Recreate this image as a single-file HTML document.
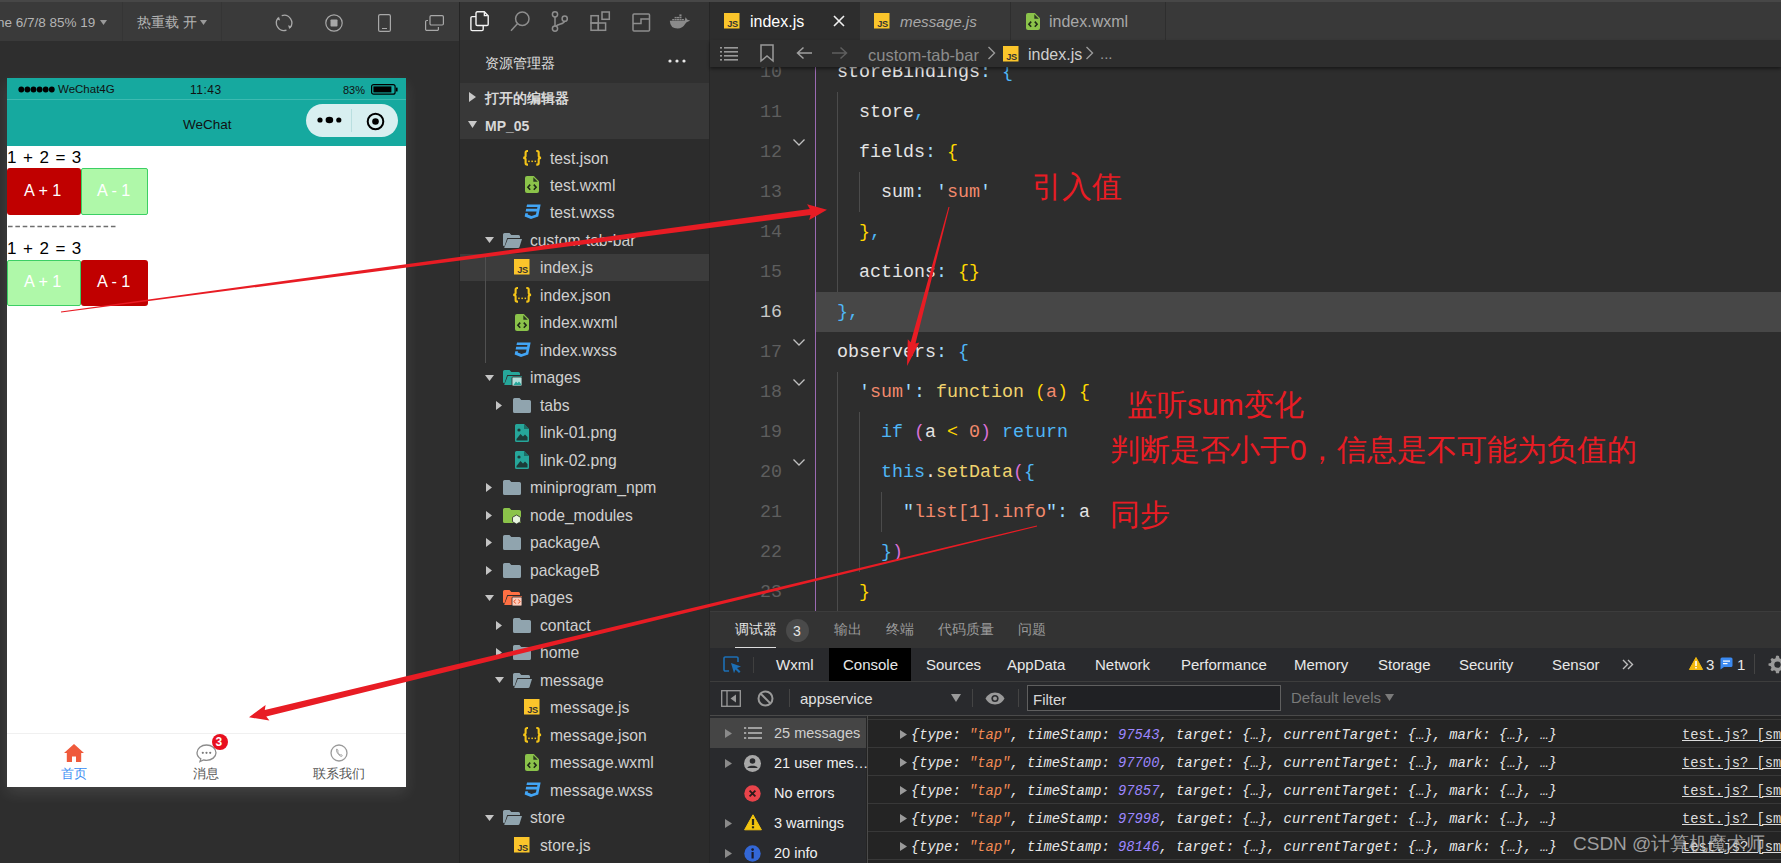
<!DOCTYPE html><html><head><meta charset="utf-8"><style>
*{margin:0;padding:0;box-sizing:border-box}
html,body{width:1781px;height:863px;overflow:hidden;background:#2e2e2e;font-family:"Liberation Sans",sans-serif;}
.a{position:absolute}
.t{position:absolute;white-space:nowrap;line-height:1}
svg{position:absolute;overflow:visible}
.mono{font-family:"Liberation Mono",monospace}
</style></head><body><div class="a" style="left:0px;top:0px;width:1781px;height:2px;background:#474747;"></div>
<div class="a" style="left:0px;top:2px;width:459px;height:38.5px;background:#3a3a3a;"></div>
<div class="a" style="left:122px;top:2px;width:1px;height:38.5px;background:#353535;"></div>
<div class="a" style="left:221px;top:2px;width:1px;height:38.5px;background:#353535;"></div>
<div class="t" style="left:-30px;top:15.5px;font-size:13.5px;color:#b4b4b4;">iPhone 6/7/8 85% 19</div>
<svg style="left:100px;top:20px" width="7" height="5"><path d="M0 0H7L3.5 5Z" fill="#9a9a9a"/></svg>
<div class="t" style="left:137px;top:15.5px;font-size:13.5px;color:#b4b4b4;">热重载 开</div>
<svg style="left:200px;top:20px" width="7" height="5"><path d="M0 0H7L3.5 5Z" fill="#9a9a9a"/></svg>
<svg style="left:275px;top:14px" width="18" height="18" viewBox="0 0 18 18"><path d="M6.72 1.58A7.7 7.7 0 0 1 15.00 13.85 M11.48 16.22A7.7 7.7 0 0 1 3.20 3.95" fill="none" stroke="#a8a8a8" stroke-width="1.3"/><path d="M14.24 15.03L16.65 12.58L13.08 11.20Z M3.96 2.77L1.55 5.22L5.12 6.60Z" fill="#a8a8a8"/></svg>
<svg style="left:325px;top:14px" width="18" height="18" viewBox="0 0 18 18"><circle cx="9" cy="9" r="8.2" fill="none" stroke="#a8a8a8" stroke-width="1.2"/><rect x="5.5" y="5.5" width="7" height="7" rx="0.8" fill="#a8a8a8"/></svg>
<svg style="left:378px;top:14px" width="13" height="18" viewBox="0 0 13 18"><rect x="0.6" y="0.6" width="11.8" height="16.8" rx="1.5" fill="none" stroke="#a8a8a8" stroke-width="1.2"/><rect x="4" y="14" width="5" height="1" fill="#a8a8a8"/></svg>
<svg style="left:425px;top:15px" width="19" height="16" viewBox="0 0 19 16" fill="none" stroke="#a8a8a8" stroke-width="1.2"><rect x="5" y="0.6" width="13.4" height="9.4" rx="1.2"/><path d="M3 5.5H1.8A1.2 1.2 0 0 0 0.6 6.7V14.2A1.2 1.2 0 0 0 1.8 15.4H12.2A1.2 1.2 0 0 0 13.4 14.2V12"/></svg>
<div class="a" style="left:7px;top:78px;width:399px;height:709px;background:#ffffff;box-shadow:0 6px 14px rgba(255,255,255,0.1);"></div>
<div class="a" style="left:7px;top:78px;width:399px;height:68px;background:#16a99f;"></div>
<div class="a" style="left:7px;top:99px;width:399px;height:1px;background:#3dbab1;"></div>
<svg style="left:17px;top:85px" width="38" height="9" viewBox="0 0 38 9"><circle cx="4.3" cy="4.5" r="2.9" fill="#000"/><circle cx="10.399999999999999" cy="4.5" r="2.9" fill="#000"/><circle cx="16.5" cy="4.5" r="2.9" fill="#000"/><circle cx="22.599999999999998" cy="4.5" r="2.9" fill="#000"/><circle cx="28.7" cy="4.5" r="2.9" fill="#000"/><circle cx="34.8" cy="4.5" r="2.9" fill="#000"/></svg>
<div class="t" style="left:58px;top:84px;font-size:11.5px;color:#111;">WeChat4G</div>
<div class="t" style="left:190px;top:84px;font-size:12px;color:#111;letter-spacing:0.5px">11:43</div>
<div class="t" style="left:343px;top:85px;font-size:11px;color:#111;">83%</div>
<svg style="left:371px;top:84px" width="28" height="11" viewBox="0 0 28 11"><rect x="0.6" y="0.6" width="23.5" height="9.6" rx="2" fill="none" stroke="#000" stroke-width="1.2"/><rect x="2.4" y="2.4" width="18" height="6" fill="#000"/><rect x="25" y="3.5" width="1.6" height="4" rx="0.5" fill="#000"/></svg>
<div class="t" style="left:183px;top:118px;font-size:13.5px;color:#111;">WeChat</div>
<div class="a" style="left:306px;top:104px;width:92px;height:33px;background:#d8eff0;border-radius:17px;"></div>
<div class="a" style="left:351px;top:109px;width:1px;height:23px;background:#b9dfe0;"></div>
<svg style="left:317px;top:115px" width="25" height="10" viewBox="0 0 25 10"><circle cx="3" cy="5" r="2.6" fill="#000"/><ellipse cx="12.4" cy="5" rx="3.8" ry="3.2" fill="#000"/><circle cx="21.8" cy="5" r="2.6" fill="#000"/></svg>
<svg style="left:366px;top:112px" width="19" height="19" viewBox="0 0 19 19"><circle cx="9.5" cy="9.5" r="7.8" fill="none" stroke="#000" stroke-width="2"/><circle cx="9.5" cy="9.5" r="3.3" fill="#000"/></svg>
<div class="t" style="left:7px;top:149px;font-size:17px;color:#000;letter-spacing:0.9px">1 + 2 = 3</div>
<div class="a" style="left:7px;top:168px;width:73.5px;height:46.5px;background:#c00000;border-radius:3px;"></div>
<div class="a" style="left:80.5px;top:168px;width:67.5px;height:46.5px;background:#aff8a9;border:1px solid #3ccf64;border-radius:2px;"></div>
<div class="t" style="left:24px;top:182px;font-size:16.2px;color:#fff;">A + 1</div>
<div class="t" style="left:97px;top:182px;font-size:16.2px;color:#fff;">A - 1</div>
<svg style="left:8px;top:225px" width="112" height="3" viewBox="0 0 112 3"><path d="M0 1.5H110" stroke="#6e6e6e" stroke-width="1.3" stroke-dasharray="4.6 2.75"/></svg>
<div class="t" style="left:7px;top:240px;font-size:17px;color:#000;letter-spacing:0.9px">1 + 2 = 3</div>
<div class="a" style="left:7px;top:259.5px;width:73.5px;height:46px;background:#aff8a9;border:1px solid #3ccf64;border-radius:2px;"></div>
<div class="a" style="left:80.5px;top:259.5px;width:67.5px;height:46px;background:#c00000;border-radius:3px;"></div>
<div class="t" style="left:24px;top:273px;font-size:16.2px;color:#fff;">A + 1</div>
<div class="t" style="left:97px;top:273px;font-size:16.2px;color:#fff;">A - 1</div>
<div class="a" style="left:7px;top:733px;width:399px;height:1px;background:#f0f0f0;"></div>
<svg style="left:64px;top:744px" width="20" height="18" viewBox="0 0 20 18"><path d="M10 0L0 9H2.8V18H8V12.5H12V18H17.2V9H20Z" fill="#ef5a3c"/></svg>
<div class="t" style="left:61px;top:768px;font-size:12.5px;color:#3c8ef3;">首页</div>
<svg style="left:196px;top:744px" width="21" height="18" viewBox="0 0 21 18"><path d="M10.5 1C5.3 1 1 4.6 1 8.8C1 11.3 2.5 13.5 4.8 14.9L4 17.5L7.6 15.9C8.5 16.2 9.5 16.4 10.5 16.4C15.7 16.4 20 12.9 20 8.7C20 4.5 15.7 1 10.5 1Z" fill="none" stroke="#8c8c8c" stroke-width="1.3"/><circle cx="6.8" cy="8.8" r="1.1" fill="#7a7a7a"/><circle cx="10.5" cy="8.8" r="1.1" fill="#7a7a7a"/><circle cx="14.2" cy="8.8" r="1.1" fill="#7a7a7a"/></svg>
<div class="a" style="left:211.5px;top:734px;width:16px;height:16px;border-radius:8px;background:#e8101f;"></div>
<div class="t" style="left:215.5px;top:736px;font-size:12px;color:#fff;font-weight:bold">3</div>
<div class="t" style="left:193px;top:768px;font-size:12.5px;color:#555;">消息</div>
<svg style="left:330px;top:744px" width="18" height="18" viewBox="0 0 18 18"><circle cx="9" cy="9" r="8" fill="none" stroke="#9a9a9a" stroke-width="1.3"/><path d="M6.5 5.2C6 6.8 7.6 10.6 10.6 12.2C11.3 12.6 12.2 12.3 12.3 11.6L11 10.5L10.2 11C9 10.3 8 9 7.6 7.8L8.2 7.2L7.4 5.4Z" fill="none" stroke="#9a9a9a" stroke-width="0.9"/></svg>
<div class="t" style="left:313px;top:768px;font-size:12.5px;color:#555;">联系我们</div>
<div class="a" style="left:459px;top:2px;width:1px;height:861px;background:#252525;"></div>
<div class="a" style="left:460px;top:2px;width:250px;height:38px;background:#333333;"></div>
<div class="a" style="left:709px;top:2px;width:1px;height:861px;background:#262626;"></div>
<svg style="left:470px;top:11px" width="20" height="21" viewBox="0 0 20 21" fill="none" stroke="#f4f4f4" stroke-width="1.4"><path d="M6 5.6H2.2Q0.9 5.6 0.9 6.9V18.3Q0.9 19.6 2.2 19.6H11.9Q13.2 19.6 13.2 18.3V14.6"/><path d="M7.3 0.8H14.3L18.2 4.7V13.2Q18.2 14.5 16.9 14.5H7.3Q6 14.5 6 13.2V2.1Q6 0.8 7.3 0.8Z"/><path d="M14.4 1.3V4.6H17.7"/></svg>
<svg style="left:510px;top:11px" width="20" height="21" viewBox="0 0 20 21" fill="none" stroke="#8e8e8e" stroke-width="1.5"><circle cx="12.3" cy="7.7" r="6.7"/><path d="M7.6 12.6L1 19.8"/></svg>
<svg style="left:551px;top:11px" width="18" height="21" viewBox="0 0 18 21" fill="none" stroke="#8e8e8e" stroke-width="1.5"><circle cx="4" cy="3.3" r="2.6"/><circle cx="4" cy="17.6" r="2.6"/><circle cx="13.7" cy="7.7" r="2.6"/><path d="M4 6V15"/><path d="M13.5 10.3C13 13.2 8 12.5 5 15"/></svg>
<svg style="left:590px;top:11px" width="21" height="21" viewBox="0 0 21 21" fill="none" stroke="#8e8e8e" stroke-width="1.5"><rect x="1" y="4.7" width="7.3" height="7.3"/><rect x="1" y="12" width="7.3" height="7.3"/><rect x="8.3" y="12" width="7.3" height="7.3"/><rect x="12" y="1" width="7.3" height="7.3"/></svg>
<svg style="left:632px;top:13px" width="19" height="19" viewBox="0 0 19 19" fill="none" stroke="#8e8e8e" stroke-width="1.5"><rect x="1" y="1" width="16.5" height="17" rx="1"/><path d="M1 10.5H9V6H17.5"/></svg>
<svg style="left:669px;top:13px" width="22" height="16" viewBox="0 0 22 16" fill="#8a8a8a"><path d="M0.8 7.8H15.6L16.6 4.2L18.4 6.8L21.2 7.6L19.2 8.6Q17.4 9.2 16.3 10.8Q13.6 15.6 8.6 15.6Q1.2 15.6 0.8 7.8Z"/><rect x="3.2" y="6" width="2.1" height="1.4"/><rect x="5.6" y="6" width="2.1" height="1.4"/><rect x="8.0" y="6" width="2.1" height="1.4"/><rect x="10.4" y="6" width="2.1" height="1.4"/><rect x="12.8" y="6" width="2.1" height="1.4"/><rect x="5.6" y="3.9" width="2.1" height="1.4"/><rect x="8.0" y="3.9" width="2.1" height="1.4"/><rect x="10.4" y="3.9" width="2.1" height="1.4"/><rect x="10.4" y="1.4" width="2.1" height="2"/></svg>
<div class="a" style="left:460px;top:40px;width:249px;height:823px;background:#2c2c2c;"></div>
<div class="t" style="left:550px;top:122.52px;font-size:16px;color:#cfcfcf">test.js</div>
<svg style="left:521.8px;top:149.6px" width="20.3" height="15.7" viewBox="0 0 20.3 15.7" fill="none" stroke="#f5c518" stroke-width="2.1"><path d="M6 1.05H5.2Q3.6 1.05 3.6 2.6V6.1Q3.6 7.6 1.3 7.85Q3.6 8.1 3.6 9.6V13.1Q3.6 14.65 5.2 14.65H6"/><path d="M14.3 1.05H15.1Q16.7 1.05 16.7 2.6V6.1Q16.7 7.6 19 7.85Q16.7 8.1 16.7 9.6V13.1Q16.7 14.65 15.1 14.65H14.3"/><rect x="6.2" y="10.6" width="1.5" height="1.5" fill="#f5c518" stroke="none"/><rect x="9.4" y="10.6" width="1.5" height="1.5" fill="#f5c518" stroke="none"/><rect x="12.6" y="10.6" width="1.5" height="1.5" fill="#f5c518" stroke="none"/></svg>
<div class="t" style="left:550px;top:150.5px;font-size:15.7px;color:#d0d0d0">test.json</div>
<svg style="left:525px;top:176.48px" width="14" height="17" viewBox="0 0 14 17"><path d="M2 0H8.8L14 5.2V15A2 2 0 0 1 12 17H2A2 2 0 0 1 0 15V2A2 2 0 0 1 2 0Z" fill="#8bc34a"/><path d="M8.3 1.2V5.7H12.8Z" fill="#2c3a22"/><path d="M5.2 8.6L2.9 11.2L5.2 13.8M8.8 8.6L11.1 11.2L8.8 13.8" fill="none" stroke="#1f2a18" stroke-width="1.6"/></svg>
<div class="t" style="left:550px;top:177.98px;font-size:15.7px;color:#d0d0d0">test.wxml</div>
<svg style="left:522.5px;top:202.46px" width="19.3" height="19.3" viewBox="0 0 24 24"><path d="M5 3l-.65 3.34h13.59L17.5 8.5H3.92l-.66 3.33h13.59l-.76 3.81-5.48 1.81-4.75-1.81.33-1.64H2.85l-.79 4 7.85 3 9.05-3 1.2-6.03.24-1.21L21.94 3H5z" fill="#42a5f5"/></svg>
<div class="t" style="left:550px;top:205.46px;font-size:15.7px;color:#d0d0d0">test.wxss</div>
<svg style="left:485px;top:237.44px" width="9" height="6" viewBox="0 0 9 6"><path d="M0 0H9L4.5 6Z" fill="#c4c4c4"/></svg>
<svg style="left:503px;top:232.94px" width="19" height="15" viewBox="0 0 19 15"><path d="M1.6 0H6.5L8.3 2H15.5A1.6 1.6 0 0 1 17 3.6V5H4.2L1.4 13.6L0 12.5V1.6A1.6 1.6 0 0 1 1.6 0Z" fill="#90a4ae"/><path d="M4.8 6H19L16.4 14.2A1.3 1.3 0 0 1 15.2 15H1.2Z" fill="#90a4ae"/></svg>
<div class="t" style="left:530px;top:232.94px;font-size:15.7px;color:#d0d0d0">custom-tab-bar</div>
<div class="a" style="left:460px;top:253.92000000000002px;width:249px;height:27px;background:#3c3c3c;"></div>
<svg style="left:514px;top:259.42px" width="15.5" height="15.5" viewBox="0 0 15.5 15.5"><rect width="15.5" height="15.5" fill="#fbc52b"/><text x="14" y="14" text-anchor="end" font-family="Liberation Sans" font-size="9.2" font-weight="bold" fill="#333" letter-spacing="-0.2">JS</text></svg>
<div class="t" style="left:540px;top:260.42px;font-size:15.7px;color:#d0d0d0">index.js</div>
<svg style="left:511.8px;top:287.0px" width="20.3" height="15.7" viewBox="0 0 20.3 15.7" fill="none" stroke="#f5c518" stroke-width="2.1"><path d="M6 1.05H5.2Q3.6 1.05 3.6 2.6V6.1Q3.6 7.6 1.3 7.85Q3.6 8.1 3.6 9.6V13.1Q3.6 14.65 5.2 14.65H6"/><path d="M14.3 1.05H15.1Q16.7 1.05 16.7 2.6V6.1Q16.7 7.6 19 7.85Q16.7 8.1 16.7 9.6V13.1Q16.7 14.65 15.1 14.65H14.3"/><rect x="6.2" y="10.6" width="1.5" height="1.5" fill="#f5c518" stroke="none"/><rect x="9.4" y="10.6" width="1.5" height="1.5" fill="#f5c518" stroke="none"/><rect x="12.6" y="10.6" width="1.5" height="1.5" fill="#f5c518" stroke="none"/></svg>
<div class="t" style="left:540px;top:287.9px;font-size:15.7px;color:#d0d0d0">index.json</div>
<svg style="left:515px;top:313.88px" width="14" height="17" viewBox="0 0 14 17"><path d="M2 0H8.8L14 5.2V15A2 2 0 0 1 12 17H2A2 2 0 0 1 0 15V2A2 2 0 0 1 2 0Z" fill="#8bc34a"/><path d="M8.3 1.2V5.7H12.8Z" fill="#2c3a22"/><path d="M5.2 8.6L2.9 11.2L5.2 13.8M8.8 8.6L11.1 11.2L8.8 13.8" fill="none" stroke="#1f2a18" stroke-width="1.6"/></svg>
<div class="t" style="left:540px;top:315.38px;font-size:15.7px;color:#d0d0d0">index.wxml</div>
<svg style="left:512.5px;top:339.86px" width="19.3" height="19.3" viewBox="0 0 24 24"><path d="M5 3l-.65 3.34h13.59L17.5 8.5H3.92l-.66 3.33h13.59l-.76 3.81-5.48 1.81-4.75-1.81.33-1.64H2.85l-.79 4 7.85 3 9.05-3 1.2-6.03.24-1.21L21.94 3H5z" fill="#42a5f5"/></svg>
<div class="t" style="left:540px;top:342.86px;font-size:15.7px;color:#d0d0d0">index.wxss</div>
<svg style="left:485px;top:374.84000000000003px" width="9" height="6" viewBox="0 0 9 6"><path d="M0 0H9L4.5 6Z" fill="#c4c4c4"/></svg>
<svg style="left:503px;top:370.34000000000003px" width="19" height="15" viewBox="0 0 19 15"><path d="M1.6 0H6.5L8.3 2H15.5A1.6 1.6 0 0 1 17 3.6V5H4.2L1.4 13.6L0 12.5V1.6A1.6 1.6 0 0 1 1.6 0Z" fill="#26a69a"/><path d="M4.8 6H19L16.4 14.2A1.3 1.3 0 0 1 15.2 15H1.2Z" fill="#26a69a"/><rect x="9" y="7" width="10" height="9" rx="1" fill="#b2dfdb" stroke="#2c2c2c" stroke-width="0.8"/><path d="M10.5 15L13 11.5L14.5 13L16 11.5L18 14V15Z" fill="#26a69a"/></svg>
<div class="t" style="left:530px;top:370.34000000000003px;font-size:15.7px;color:#d0d0d0">images</div>
<svg style="left:496px;top:400.82px" width="6" height="9" viewBox="0 0 6 9"><path d="M0 0V9L6 4.5Z" fill="#c4c4c4"/></svg>
<svg style="left:513px;top:397.82px" width="18" height="15" viewBox="0 0 18 15"><path d="M1.6 0H6.5L8.3 2H16.4A1.6 1.6 0 0 1 18 3.6V13.4A1.6 1.6 0 0 1 16.4 15H1.6A1.6 1.6 0 0 1 0 13.4V1.6A1.6 1.6 0 0 1 1.6 0Z" fill="#90a4ae"/></svg>
<div class="t" style="left:540px;top:397.82px;font-size:15.7px;color:#d0d0d0">tabs</div>
<svg style="left:515px;top:423.8px" width="14" height="18" viewBox="0 0 14 18"><path d="M1.5 0H9L14 5V16.5A1.5 1.5 0 0 1 12.5 18H1.5A1.5 1.5 0 0 1 0 16.5V1.5A1.5 1.5 0 0 1 1.5 0Z" fill="#26a69a"/><path d="M9 0V5H14Z" fill="#1c6e66"/><circle cx="4" cy="6" r="1.6" fill="#1d3b38"/><path d="M1.5 15L5.5 10L8 12.5L10 10.5L12.5 13V16.5H1.5Z" fill="#1d3b38"/></svg>
<div class="t" style="left:540px;top:425.3px;font-size:15.7px;color:#d0d0d0">link-01.png</div>
<svg style="left:515px;top:451.28000000000003px" width="14" height="18" viewBox="0 0 14 18"><path d="M1.5 0H9L14 5V16.5A1.5 1.5 0 0 1 12.5 18H1.5A1.5 1.5 0 0 1 0 16.5V1.5A1.5 1.5 0 0 1 1.5 0Z" fill="#26a69a"/><path d="M9 0V5H14Z" fill="#1c6e66"/><circle cx="4" cy="6" r="1.6" fill="#1d3b38"/><path d="M1.5 15L5.5 10L8 12.5L10 10.5L12.5 13V16.5H1.5Z" fill="#1d3b38"/></svg>
<div class="t" style="left:540px;top:452.78000000000003px;font-size:15.7px;color:#d0d0d0">link-02.png</div>
<svg style="left:486px;top:483.26px" width="6" height="9" viewBox="0 0 6 9"><path d="M0 0V9L6 4.5Z" fill="#c4c4c4"/></svg>
<svg style="left:503px;top:480.26px" width="18" height="15" viewBox="0 0 18 15"><path d="M1.6 0H6.5L8.3 2H16.4A1.6 1.6 0 0 1 18 3.6V13.4A1.6 1.6 0 0 1 16.4 15H1.6A1.6 1.6 0 0 1 0 13.4V1.6A1.6 1.6 0 0 1 1.6 0Z" fill="#90a4ae"/></svg>
<div class="t" style="left:530px;top:480.26px;font-size:15.7px;color:#d0d0d0">miniprogram_npm</div>
<svg style="left:486px;top:510.74px" width="6" height="9" viewBox="0 0 6 9"><path d="M0 0V9L6 4.5Z" fill="#c4c4c4"/></svg>
<svg style="left:503px;top:507.74px" width="18" height="15" viewBox="0 0 18 15"><path d="M1.6 0H6.5L8.3 2H16.4A1.6 1.6 0 0 1 18 3.6V13.4A1.6 1.6 0 0 1 16.4 15H1.6A1.6 1.6 0 0 1 0 13.4V1.6A1.6 1.6 0 0 1 1.6 0Z" fill="#8bc34a"/><path d="M13.5 7L17.5 9.3V13.7L13.5 16L9.5 13.7V9.3Z" fill="#e8f5e0" stroke="#2c2c2c" stroke-width="0.8"/></svg>
<div class="t" style="left:530px;top:507.74px;font-size:15.7px;color:#d0d0d0">node_modules</div>
<svg style="left:486px;top:538.22px" width="6" height="9" viewBox="0 0 6 9"><path d="M0 0V9L6 4.5Z" fill="#c4c4c4"/></svg>
<svg style="left:503px;top:535.22px" width="18" height="15" viewBox="0 0 18 15"><path d="M1.6 0H6.5L8.3 2H16.4A1.6 1.6 0 0 1 18 3.6V13.4A1.6 1.6 0 0 1 16.4 15H1.6A1.6 1.6 0 0 1 0 13.4V1.6A1.6 1.6 0 0 1 1.6 0Z" fill="#90a4ae"/></svg>
<div class="t" style="left:530px;top:535.22px;font-size:15.7px;color:#d0d0d0">packageA</div>
<svg style="left:486px;top:565.7px" width="6" height="9" viewBox="0 0 6 9"><path d="M0 0V9L6 4.5Z" fill="#c4c4c4"/></svg>
<svg style="left:503px;top:562.7px" width="18" height="15" viewBox="0 0 18 15"><path d="M1.6 0H6.5L8.3 2H16.4A1.6 1.6 0 0 1 18 3.6V13.4A1.6 1.6 0 0 1 16.4 15H1.6A1.6 1.6 0 0 1 0 13.4V1.6A1.6 1.6 0 0 1 1.6 0Z" fill="#90a4ae"/></svg>
<div class="t" style="left:530px;top:562.7px;font-size:15.7px;color:#d0d0d0">packageB</div>
<svg style="left:485px;top:594.6800000000001px" width="9" height="6" viewBox="0 0 9 6"><path d="M0 0H9L4.5 6Z" fill="#c4c4c4"/></svg>
<svg style="left:503px;top:590.1800000000001px" width="19" height="15" viewBox="0 0 19 15"><path d="M1.6 0H6.5L8.3 2H15.5A1.6 1.6 0 0 1 17 3.6V5H4.2L1.4 13.6L0 12.5V1.6A1.6 1.6 0 0 1 1.6 0Z" fill="#ff7043"/><path d="M4.8 6H19L16.4 14.2A1.3 1.3 0 0 1 15.2 15H1.2Z" fill="#ff7043"/><rect x="9" y="7" width="10" height="9" rx="1" fill="#ffccbc" stroke="#2c2c2c" stroke-width="0.8"/><path d="M12.6 9.5L11 11.5L12.6 13.5M15.4 9.5L17 11.5L15.4 13.5" fill="none" stroke="#e64a19" stroke-width="1"/></svg>
<div class="t" style="left:530px;top:590.1800000000001px;font-size:15.7px;color:#d0d0d0">pages</div>
<svg style="left:496px;top:620.6600000000001px" width="6" height="9" viewBox="0 0 6 9"><path d="M0 0V9L6 4.5Z" fill="#c4c4c4"/></svg>
<svg style="left:513px;top:617.6600000000001px" width="18" height="15" viewBox="0 0 18 15"><path d="M1.6 0H6.5L8.3 2H16.4A1.6 1.6 0 0 1 18 3.6V13.4A1.6 1.6 0 0 1 16.4 15H1.6A1.6 1.6 0 0 1 0 13.4V1.6A1.6 1.6 0 0 1 1.6 0Z" fill="#90a4ae"/></svg>
<div class="t" style="left:540px;top:617.6600000000001px;font-size:15.7px;color:#d0d0d0">contact</div>
<svg style="left:496px;top:648.14px" width="6" height="9" viewBox="0 0 6 9"><path d="M0 0V9L6 4.5Z" fill="#c4c4c4"/></svg>
<svg style="left:513px;top:645.14px" width="18" height="15" viewBox="0 0 18 15"><path d="M1.6 0H6.5L8.3 2H16.4A1.6 1.6 0 0 1 18 3.6V13.4A1.6 1.6 0 0 1 16.4 15H1.6A1.6 1.6 0 0 1 0 13.4V1.6A1.6 1.6 0 0 1 1.6 0Z" fill="#90a4ae"/></svg>
<div class="t" style="left:540px;top:645.14px;font-size:15.7px;color:#d0d0d0">home</div>
<svg style="left:495px;top:677.12px" width="9" height="6" viewBox="0 0 9 6"><path d="M0 0H9L4.5 6Z" fill="#c4c4c4"/></svg>
<svg style="left:513px;top:672.62px" width="19" height="15" viewBox="0 0 19 15"><path d="M1.6 0H6.5L8.3 2H15.5A1.6 1.6 0 0 1 17 3.6V5H4.2L1.4 13.6L0 12.5V1.6A1.6 1.6 0 0 1 1.6 0Z" fill="#90a4ae"/><path d="M4.8 6H19L16.4 14.2A1.3 1.3 0 0 1 15.2 15H1.2Z" fill="#90a4ae"/></svg>
<div class="t" style="left:540px;top:672.62px;font-size:15.7px;color:#d0d0d0">message</div>
<svg style="left:524px;top:699.1px" width="15.5" height="15.5" viewBox="0 0 15.5 15.5"><rect width="15.5" height="15.5" fill="#fbc52b"/><text x="14" y="14" text-anchor="end" font-family="Liberation Sans" font-size="9.2" font-weight="bold" fill="#333" letter-spacing="-0.2">JS</text></svg>
<div class="t" style="left:550px;top:700.1px;font-size:15.7px;color:#d0d0d0">message.js</div>
<svg style="left:521.8px;top:726.6800000000001px" width="20.3" height="15.7" viewBox="0 0 20.3 15.7" fill="none" stroke="#f5c518" stroke-width="2.1"><path d="M6 1.05H5.2Q3.6 1.05 3.6 2.6V6.1Q3.6 7.6 1.3 7.85Q3.6 8.1 3.6 9.6V13.1Q3.6 14.65 5.2 14.65H6"/><path d="M14.3 1.05H15.1Q16.7 1.05 16.7 2.6V6.1Q16.7 7.6 19 7.85Q16.7 8.1 16.7 9.6V13.1Q16.7 14.65 15.1 14.65H14.3"/><rect x="6.2" y="10.6" width="1.5" height="1.5" fill="#f5c518" stroke="none"/><rect x="9.4" y="10.6" width="1.5" height="1.5" fill="#f5c518" stroke="none"/><rect x="12.6" y="10.6" width="1.5" height="1.5" fill="#f5c518" stroke="none"/></svg>
<div class="t" style="left:550px;top:727.58px;font-size:15.7px;color:#d0d0d0">message.json</div>
<svg style="left:525px;top:753.5600000000001px" width="14" height="17" viewBox="0 0 14 17"><path d="M2 0H8.8L14 5.2V15A2 2 0 0 1 12 17H2A2 2 0 0 1 0 15V2A2 2 0 0 1 2 0Z" fill="#8bc34a"/><path d="M8.3 1.2V5.7H12.8Z" fill="#2c3a22"/><path d="M5.2 8.6L2.9 11.2L5.2 13.8M8.8 8.6L11.1 11.2L8.8 13.8" fill="none" stroke="#1f2a18" stroke-width="1.6"/></svg>
<div class="t" style="left:550px;top:755.0600000000001px;font-size:15.7px;color:#d0d0d0">message.wxml</div>
<svg style="left:522.5px;top:779.54px" width="19.3" height="19.3" viewBox="0 0 24 24"><path d="M5 3l-.65 3.34h13.59L17.5 8.5H3.92l-.66 3.33h13.59l-.76 3.81-5.48 1.81-4.75-1.81.33-1.64H2.85l-.79 4 7.85 3 9.05-3 1.2-6.03.24-1.21L21.94 3H5z" fill="#42a5f5"/></svg>
<div class="t" style="left:550px;top:782.54px;font-size:15.7px;color:#d0d0d0">message.wxss</div>
<svg style="left:485px;top:814.52px" width="9" height="6" viewBox="0 0 9 6"><path d="M0 0H9L4.5 6Z" fill="#c4c4c4"/></svg>
<svg style="left:503px;top:810.02px" width="19" height="15" viewBox="0 0 19 15"><path d="M1.6 0H6.5L8.3 2H15.5A1.6 1.6 0 0 1 17 3.6V5H4.2L1.4 13.6L0 12.5V1.6A1.6 1.6 0 0 1 1.6 0Z" fill="#90a4ae"/><path d="M4.8 6H19L16.4 14.2A1.3 1.3 0 0 1 15.2 15H1.2Z" fill="#90a4ae"/></svg>
<div class="t" style="left:530px;top:810.02px;font-size:15.7px;color:#d0d0d0">store</div>
<svg style="left:514px;top:836.5px" width="15.5" height="15.5" viewBox="0 0 15.5 15.5"><rect width="15.5" height="15.5" fill="#fbc52b"/><text x="14" y="14" text-anchor="end" font-family="Liberation Sans" font-size="9.2" font-weight="bold" fill="#333" letter-spacing="-0.2">JS</text></svg>
<div class="t" style="left:540px;top:837.5px;font-size:15.7px;color:#d0d0d0">store.js</div>
<div class="a" style="left:485px;top:254.92000000000002px;width:1px;height:107.92px;background:#505050;"></div>
<div class="a" style="left:460px;top:40px;width:249px;height:43px;background:#303030;"></div>
<div class="t" style="left:485px;top:56.5px;font-size:13.5px;color:#e0e0e0;">资源管理器</div>
<svg style="left:668px;top:59px" width="18" height="4" viewBox="0 0 18 4" fill="#e8e8e8"><circle cx="2" cy="2" r="1.6"/><circle cx="9" cy="2" r="1.6"/><circle cx="16" cy="2" r="1.6"/></svg>
<div class="a" style="left:460px;top:83px;width:249px;height:55.5px;background:#383838;"></div>
<svg style="left:469px;top:92px" width="7" height="10" viewBox="0 0 7 10"><path d="M0 0V10L7 5Z" fill="#c8c8c8"/></svg>
<div class="t" style="left:485px;top:92px;font-size:13.5px;color:#d8d8d8;font-weight:bold">打开的编辑器</div>
<svg style="left:468px;top:121px" width="9" height="7" viewBox="0 0 9 7"><path d="M0 0H9L4.5 7Z" fill="#c8c8c8"/></svg>
<div class="t" style="left:485px;top:118.5px;font-size:14px;color:#d8d8d8;font-weight:bold">MP_05</div>
<div class="a" style="left:710px;top:2px;width:1071px;height:38px;background:#393939;"></div>
<div class="a" style="left:710px;top:2px;width:150px;height:38px;background:#2d2d2d;"></div>
<div class="a" style="left:860px;top:2px;width:150px;height:38px;background:#383838;"></div>
<div class="a" style="left:1010px;top:2px;width:1px;height:38px;background:#2e2e2e;"></div>
<div class="a" style="left:1011px;top:2px;width:154px;height:38px;background:#383838;"></div>
<div class="a" style="left:1165px;top:2px;width:1px;height:38px;background:#2e2e2e;"></div>
<svg style="left:724px;top:12.5px" width="15.5" height="15.5" viewBox="0 0 15.5 15.5"><rect width="15.5" height="15.5" fill="#fbc52b"/><text x="14" y="14" text-anchor="end" font-family="Liberation Sans" font-size="9.2" font-weight="bold" fill="#333" letter-spacing="-0.2">JS</text></svg>
<div class="t" style="left:750px;top:13.5px;font-size:16px;color:#ffffff;">index.js</div>
<svg style="left:833px;top:15px" width="12" height="12" viewBox="0 0 12 12" stroke="#f0f0f0" stroke-width="1.6"><path d="M1 1L11 11M11 1L1 11"/></svg>
<svg style="left:874px;top:12.5px" width="15.5" height="15.5" viewBox="0 0 15.5 15.5"><rect width="15.5" height="15.5" fill="#fbc52b"/><text x="14" y="14" text-anchor="end" font-family="Liberation Sans" font-size="9.2" font-weight="bold" fill="#333" letter-spacing="-0.2">JS</text></svg>
<div class="t" style="left:900px;top:13.5px;font-size:15.2px;color:#a8a8a8;font-style:italic">message.js</div>
<svg style="left:1026px;top:13px" width="14" height="17" viewBox="0 0 14 17"><path d="M2 0H8.8L14 5.2V15A2 2 0 0 1 12 17H2A2 2 0 0 1 0 15V2A2 2 0 0 1 2 0Z" fill="#8bc34a"/><path d="M8.3 1.2V5.7H12.8Z" fill="#2c3a22"/><path d="M5.2 8.6L2.9 11.2L5.2 13.8M8.8 8.6L11.1 11.2L8.8 13.8" fill="none" stroke="#1f2a18" stroke-width="1.6"/></svg>
<div class="t" style="left:1049px;top:13.5px;font-size:16px;color:#a8a8a8;">index.wxml</div>
<div class="a" style="left:710px;top:67px;width:1071px;height:545px;background:#2d2d2d;"></div>
<div class="a" style="left:816px;top:292px;width:965px;height:40px;background:#474747;"></div>
<div class="a" style="left:815px;top:67px;width:1px;height:545px;background:#9b6ab3;"></div>
<div class="a" style="left:837px;top:92px;width:1px;height:200px;background:#4b4b4b;"></div>
<div class="a" style="left:859px;top:172px;width:1px;height:40px;background:#4b4b4b;"></div>
<div class="a" style="left:837px;top:372px;width:1px;height:240px;background:#4b4b4b;"></div>
<div class="a" style="left:859px;top:412px;width:1px;height:160px;background:#4b4b4b;"></div>
<div class="a" style="left:881px;top:492px;width:1px;height:40px;background:#4b4b4b;"></div>
<div class="t mono" style="left:700px;width:82px;text-align:right;top:64px;font-size:18.33px;color:#5e5e5e">10</div>
<div class="t mono" style="left:837px;top:64px;font-size:18.33px;color:#e4e4e4"><span style="color:#e4e4e4">storeBindings</span><span style="color:#9cdcfe">:</span> <span style="color:#4fb6f5">{</span></div>
<div class="t mono" style="left:700px;width:82px;text-align:right;top:104px;font-size:18.33px;color:#5e5e5e">11</div>
<div class="t mono" style="left:859px;top:104px;font-size:18.33px;color:#e4e4e4"><span style="color:#e4e4e4">store</span><span style="color:#4fb6f5">,</span></div>
<div class="t mono" style="left:700px;width:82px;text-align:right;top:144px;font-size:18.33px;color:#5e5e5e">12</div>
<div class="t mono" style="left:859px;top:144px;font-size:18.33px;color:#e4e4e4"><span style="color:#e4e4e4">fields</span><span style="color:#9cdcfe">:</span> <span style="color:#ffd700">{</span></div>
<div class="t mono" style="left:700px;width:82px;text-align:right;top:184px;font-size:18.33px;color:#5e5e5e">13</div>
<div class="t mono" style="left:881px;top:184px;font-size:18.33px;color:#e4e4e4"><span style="color:#e4e4e4">sum</span><span style="color:#9cdcfe">:</span> <span style="color:#9cdcfe">'</span><span style="color:#f28a6c">sum</span><span style="color:#9cdcfe">'</span></div>
<div class="t mono" style="left:700px;width:82px;text-align:right;top:224px;font-size:18.33px;color:#5e5e5e">14</div>
<div class="t mono" style="left:859px;top:224px;font-size:18.33px;color:#e4e4e4"><span style="color:#ffd700">}</span><span style="color:#4fb6f5">,</span></div>
<div class="t mono" style="left:700px;width:82px;text-align:right;top:264px;font-size:18.33px;color:#5e5e5e">15</div>
<div class="t mono" style="left:859px;top:264px;font-size:18.33px;color:#e4e4e4"><span style="color:#e4e4e4">actions</span><span style="color:#9cdcfe">:</span> <span style="color:#ffd700">{}</span></div>
<div class="t mono" style="left:700px;width:82px;text-align:right;top:304px;font-size:18.33px;color:#c8c8c8">16</div>
<div class="t mono" style="left:837px;top:304px;font-size:18.33px;color:#e4e4e4"><span style="color:#4fb6f5">}</span><span style="color:#4fb6f5">,</span></div>
<div class="t mono" style="left:700px;width:82px;text-align:right;top:344px;font-size:18.33px;color:#5e5e5e">17</div>
<div class="t mono" style="left:837px;top:344px;font-size:18.33px;color:#e4e4e4"><span style="color:#e4e4e4">observers</span><span style="color:#9cdcfe">:</span> <span style="color:#4fb6f5">{</span></div>
<div class="t mono" style="left:700px;width:82px;text-align:right;top:384px;font-size:18.33px;color:#5e5e5e">18</div>
<div class="t mono" style="left:859px;top:384px;font-size:18.33px;color:#e4e4e4"><span style="color:#9cdcfe">'</span><span style="color:#f28a6c">sum</span><span style="color:#9cdcfe">'</span><span style="color:#9cdcfe">:</span> <span style="color:#f0d36e">function</span> <span style="color:#ffd700">(</span><span style="color:#f28a6c">a</span><span style="color:#ffd700">)</span> <span style="color:#ffd700">{</span></div>
<div class="t mono" style="left:700px;width:82px;text-align:right;top:424px;font-size:18.33px;color:#5e5e5e">19</div>
<div class="t mono" style="left:881px;top:424px;font-size:18.33px;color:#e4e4e4"><span style="color:#4fb6f5">if</span> <span style="color:#da70d6">(</span><span style="color:#e4e4e4">a</span> <span style="color:#ffd700">&lt;</span> <span style="color:#f28a6c">0</span><span style="color:#da70d6">)</span> <span style="color:#4fb6f5">return</span></div>
<div class="t mono" style="left:700px;width:82px;text-align:right;top:464px;font-size:18.33px;color:#5e5e5e">20</div>
<div class="t mono" style="left:881px;top:464px;font-size:18.33px;color:#e4e4e4"><span style="color:#4fb6f5">this</span><span style="color:#e4e4e4">.</span><span style="color:#f0d36e">setData</span><span style="color:#da70d6">(</span><span style="color:#4fb6f5">{</span></div>
<div class="t mono" style="left:700px;width:82px;text-align:right;top:504px;font-size:18.33px;color:#5e5e5e">21</div>
<div class="t mono" style="left:903px;top:504px;font-size:18.33px;color:#e4e4e4"><span style="color:#9cdcfe">"</span><span style="color:#f28a6c">list[1].info</span><span style="color:#9cdcfe">"</span><span style="color:#9cdcfe">:</span> <span style="color:#e4e4e4">a</span></div>
<div class="t mono" style="left:700px;width:82px;text-align:right;top:544px;font-size:18.33px;color:#5e5e5e">22</div>
<div class="t mono" style="left:881px;top:544px;font-size:18.33px;color:#e4e4e4"><span style="color:#4fb6f5">}</span><span style="color:#da70d6">)</span></div>
<div class="t mono" style="left:700px;width:82px;text-align:right;top:584px;font-size:18.33px;color:#5e5e5e">23</div>
<div class="t mono" style="left:859px;top:584px;font-size:18.33px;color:#e4e4e4"><span style="color:#ffd700">}</span></div>
<svg style="left:793px;top:139px" width="12" height="7" viewBox="0 0 12 7" fill="none" stroke="#c0c0c0" stroke-width="1.3"><path d="M0.5 0.5L6 6L11.5 0.5"/></svg>
<svg style="left:793px;top:339px" width="12" height="7" viewBox="0 0 12 7" fill="none" stroke="#c0c0c0" stroke-width="1.3"><path d="M0.5 0.5L6 6L11.5 0.5"/></svg>
<svg style="left:793px;top:379px" width="12" height="7" viewBox="0 0 12 7" fill="none" stroke="#c0c0c0" stroke-width="1.3"><path d="M0.5 0.5L6 6L11.5 0.5"/></svg>
<svg style="left:793px;top:459px" width="12" height="7" viewBox="0 0 12 7" fill="none" stroke="#c0c0c0" stroke-width="1.3"><path d="M0.5 0.5L6 6L11.5 0.5"/></svg>
<div class="a" style="left:710px;top:40px;width:1071px;height:27px;background:#2e2e2e;box-shadow:0 2px 3px rgba(0,0,0,0.45);"></div>
<svg style="left:720px;top:46px" width="18" height="15" viewBox="0 0 18 15" fill="#9a9a9a"><rect x="0" y="1" width="2" height="1.6"/><rect x="4" y="1" width="14" height="1.6"/><rect x="0" y="5" width="2" height="1.6"/><rect x="4" y="5" width="14" height="1.6"/><rect x="0" y="9" width="2" height="1.6"/><rect x="4" y="9" width="14" height="1.6"/><rect x="0" y="13" width="2" height="1.6"/><rect x="4" y="13" width="14" height="1.6"/></svg>
<svg style="left:760px;top:44px" width="14" height="18" viewBox="0 0 14 18" fill="none" stroke="#9a9a9a" stroke-width="1.5"><path d="M1 1H13V17L7 12L1 17Z"/></svg>
<svg style="left:796px;top:46px" width="17" height="14" viewBox="0 0 17 14" fill="none" stroke="#a0a0a0" stroke-width="1.5"><path d="M16 7H2M7.5 1.5L1.5 7L7.5 12.5"/></svg>
<svg style="left:831px;top:46px" width="17" height="14" viewBox="0 0 17 14" fill="none" stroke="#5f5f5f" stroke-width="1.5"><path d="M1 7H15M9.5 1.5L15.5 7L9.5 12.5"/></svg>
<div class="t" style="left:868px;top:47px;font-size:16.5px;color:#8c8c8c;">custom-tab-bar</div>
<svg style="left:987px;top:46px" width="9" height="14" viewBox="0 0 9 14" fill="none" stroke="#9a9a9a" stroke-width="1.4"><path d="M1.5 1L7.5 7L1.5 13"/></svg>
<svg style="left:1003px;top:45.5px" width="15.5" height="15.5" viewBox="0 0 15.5 15.5"><rect width="15.5" height="15.5" fill="#fbc52b"/><text x="14" y="14" text-anchor="end" font-family="Liberation Sans" font-size="9.2" font-weight="bold" fill="#333" letter-spacing="-0.2">JS</text></svg>
<div class="t" style="left:1028px;top:47px;font-size:16px;color:#cfcfcf;">index.js</div>
<svg style="left:1085px;top:46px" width="9" height="14" viewBox="0 0 9 14" fill="none" stroke="#9a9a9a" stroke-width="1.4"><path d="M1.5 1L7.5 7L1.5 13"/></svg>
<div class="t" style="left:1100px;top:46px;font-size:15px;color:#9a9a9a;">...</div>
<div class="t" style="left:1032px;top:172px;font-size:30px;color:#e81c24;">引入值</div>
<div class="t" style="left:1127px;top:390px;font-size:30px;color:#e81c24;">监听sum变化</div>
<div class="t" style="left:1110px;top:435px;font-size:30px;color:#e81c24;">判断是否小于0，信息是不可能为负值的</div>
<div class="t" style="left:1110px;top:500px;font-size:30px;color:#e81c24;">同步</div>
<div class="a" style="left:710px;top:611px;width:1071px;height:1px;background:#3c3c3c;"></div>
<div class="a" style="left:710px;top:612px;width:1071px;height:36px;background:#333333;"></div>
<div class="t" style="left:735px;top:623px;font-size:13.5px;color:#e6e6e6;">调试器</div>
<div class="a" style="left:786px;top:619px;width:23px;height:23px;border-radius:12px;background:#4a4a4a"></div>
<div class="t" style="left:793px;top:624px;font-size:14px;color:#e6e6e6;">3</div>
<div class="a" style="left:735px;top:646.5px;width:41px;height:1.5px;background:#dcdcdc;"></div>
<div class="t" style="left:834px;top:623px;font-size:13.5px;color:#9a9a9a;">输出</div>
<div class="t" style="left:886px;top:623px;font-size:13.5px;color:#9a9a9a;">终端</div>
<div class="t" style="left:938px;top:623px;font-size:13.5px;color:#9a9a9a;">代码质量</div>
<div class="t" style="left:1018px;top:623px;font-size:13.5px;color:#9a9a9a;">问题</div>
<div class="a" style="left:710px;top:648px;width:1071px;height:33px;background:#292a2d;"></div>
<svg style="left:723px;top:656px" width="19" height="17" viewBox="0 0 19 17"><path d="M6 15H2.2A1.2 1.2 0 0 1 1 13.8V2.2A1.2 1.2 0 0 1 2.2 1H13.8A1.2 1.2 0 0 1 15 2.2V6" fill="none" stroke="#1c6fb5" stroke-width="1.6"/><path d="M8 7L18 10.5L14 12L17.5 15.5L16 17L12.5 13.5L11 17.2Z" fill="#1c6fb5"/></svg>
<div class="a" style="left:753px;top:657px;width:1px;height:16px;background:#3f3f3f;"></div>
<div class="a" style="left:829px;top:648px;width:82px;height:33px;background:#000000;"></div>
<div class="t" style="left:776px;top:657px;font-size:15px;color:#e8e8e8;">Wxml</div>
<div class="t" style="left:843px;top:657px;font-size:15px;color:#e8e8e8;">Console</div>
<div class="t" style="left:926px;top:657px;font-size:15px;color:#e8e8e8;">Sources</div>
<div class="t" style="left:1007px;top:657px;font-size:15px;color:#e8e8e8;">AppData</div>
<div class="t" style="left:1095px;top:657px;font-size:15px;color:#e8e8e8;">Network</div>
<div class="t" style="left:1181px;top:657px;font-size:15px;color:#e8e8e8;">Performance</div>
<div class="t" style="left:1294px;top:657px;font-size:15px;color:#e8e8e8;">Memory</div>
<div class="t" style="left:1378px;top:657px;font-size:15px;color:#e8e8e8;">Storage</div>
<div class="t" style="left:1459px;top:657px;font-size:15px;color:#e8e8e8;">Security</div>
<div class="t" style="left:1552px;top:657px;font-size:15px;color:#e8e8e8;">Sensor</div>
<svg style="left:1622px;top:659px" width="12" height="11" viewBox="0 0 12 11" fill="none" stroke="#bdbdbd" stroke-width="1.4"><path d="M1 1L5.5 5.5L1 10M6 1L10.5 5.5L6 10"/></svg>
<svg style="left:1689px;top:657px" width="14" height="13" viewBox="0 0 14 13"><path d="M7 0.5L13.6 12.5H0.4Z" fill="#f2b90f" stroke="#f2b90f" stroke-linejoin="round"/><rect x="6.2" y="4" width="1.6" height="5" fill="#fff"/><rect x="6.2" y="10" width="1.6" height="1.5" fill="#fff"/></svg>
<div class="t" style="left:1706px;top:657px;font-size:15px;color:#e8e8e8;">3</div>
<svg style="left:1720px;top:657px" width="13" height="13" viewBox="0 0 13 13"><path d="M2 0.5H11A1.5 1.5 0 0 1 12.5 2V8.5A1.5 1.5 0 0 1 11 10H4L0.5 12.5V2A1.5 1.5 0 0 1 2 0.5Z" fill="#3b8af2"/><rect x="3" y="3.5" width="7" height="1.2" fill="#fff"/><rect x="3" y="6" width="4.5" height="1.2" fill="#fff"/></svg>
<div class="t" style="left:1737px;top:657px;font-size:15px;color:#e8e8e8;">1</div>
<div class="a" style="left:1754px;top:654px;width:1px;height:20px;background:#444;"></div>
<svg style="left:1767px;top:654px" width="20" height="20" viewBox="0 0 20 20"><path fill="#9a9a9a" d="M10 1.5L12 2L12.4 4.2L14 5L16 4L17.5 5.5L16.5 7.5L17.2 9L19.5 9.6V11.6L17.2 12.2L16.5 13.8L17.5 15.8L16 17.3L14 16.3L12.4 17.1L12 19.3H9L8.6 17.1L7 16.3L5 17.3L3.5 15.8L4.5 13.8L3.8 12.2L1.5 11.6V9.6L3.8 9L4.5 7.5L3.5 5.5L5 4L7 5L8.6 4.2L9 2Z"/><circle cx="10.5" cy="10.6" r="3.2" fill="#292a2d"/></svg>
<div class="a" style="left:710px;top:681px;width:1071px;height:1px;background:#3d3d3d;"></div>
<div class="a" style="left:710px;top:682px;width:1071px;height:33px;background:#292a2d;"></div>
<svg style="left:721px;top:690px" width="20" height="17" viewBox="0 0 20 17" fill="none" stroke="#9a9a9a" stroke-width="1.3"><rect x="0.7" y="0.7" width="18.6" height="15.6"/><path d="M6 0.7V16.3"/><path d="M15 4.5V12.5L9.5 8.5Z" fill="#9a9a9a" stroke="none"/></svg>
<svg style="left:757px;top:690px" width="17" height="17" viewBox="0 0 17 17" fill="none" stroke="#9a9a9a" stroke-width="2"><circle cx="8.5" cy="8.5" r="7"/><path d="M3.6 3.6L13.4 13.4"/></svg>
<div class="a" style="left:789px;top:689px;width:1px;height:18px;background:#444;"></div>
<div class="t" style="left:800px;top:691px;font-size:15px;color:#e0e0e0;">appservice</div>
<svg style="left:951px;top:694px" width="10" height="8" viewBox="0 0 10 8"><path d="M0 0H10L5 8Z" fill="#9a9a9a"/></svg>
<div class="a" style="left:972px;top:689px;width:1px;height:18px;background:#444;"></div>
<svg style="left:985px;top:692px" width="20" height="13" viewBox="0 0 20 13"><path d="M10 0.5C5.5 0.5 2 3.5 0.5 6.5C2 9.5 5.5 12.5 10 12.5C14.5 12.5 18 9.5 19.5 6.5C18 3.5 14.5 0.5 10 0.5Z" fill="#9a9a9a"/><circle cx="10" cy="6.5" r="3.6" fill="#292a2d"/><circle cx="10" cy="6.5" r="2" fill="#9a9a9a"/></svg>
<div class="a" style="left:1018px;top:689px;width:1px;height:18px;background:#444;"></div>
<div class="a" style="left:1027px;top:685px;width:254px;height:26px;background:#202124;border:1px solid #5f5f5f"></div>
<div class="t" style="left:1033px;top:692px;font-size:15px;color:#d8d8d8;">Filter</div>
<div class="t" style="left:1291px;top:690px;font-size:15px;color:#7a7a7a;">Default levels</div>
<svg style="left:1385px;top:694px" width="9" height="7" viewBox="0 0 9 7"><path d="M0 0H9L4.5 7Z" fill="#7a7a7a"/></svg>
<div class="a" style="left:710px;top:715px;width:1071px;height:1px;background:#4a4a4a;"></div>
<div class="a" style="left:710px;top:716px;width:1071px;height:147px;background:#242424;"></div>
<div class="a" style="left:710px;top:716px;width:156px;height:147px;background:#292a2d;"></div>
<div class="a" style="left:866px;top:716px;width:1px;height:147px;background:#242424;"></div>
<div class="a" style="left:867px;top:716px;width:1px;height:147px;background:#4a4a4a;"></div>
<div class="a" style="left:710px;top:718px;width:156px;height:30px;background:#454545;"></div>
<svg style="left:725px;top:729px" width="7" height="9" viewBox="0 0 7 9"><path d="M0 0V9L7 4.5Z" fill="#8a8a8a"/></svg>
<svg style="left:744px;top:726px" width="18" height="14" viewBox="0 0 18 14" fill="#a0a0a0"><rect x="0" y="1" width="2.2" height="2"/><rect x="4" y="1" width="14" height="2"/><rect x="0" y="6" width="2.2" height="2"/><rect x="4" y="6" width="14" height="2"/><rect x="0" y="11" width="2.2" height="2"/><rect x="4" y="11" width="14" height="2"/></svg>
<div class="t" style="left:774px;top:725.5px;font-size:14.5px;color:#cfcfcf;">25 messages</div>
<svg style="left:725px;top:759px" width="7" height="9" viewBox="0 0 7 9"><path d="M0 0V9L7 4.5Z" fill="#8a8a8a"/></svg>
<svg style="left:744px;top:755px" width="17" height="17" viewBox="0 0 17 17"><circle cx="8.5" cy="8.5" r="8.5" fill="#a8a8a8"/><circle cx="8.5" cy="6" r="2.8" fill="#292a2d"/><path d="M3.5 12.5C4.5 10.2 12.5 10.2 13.5 12.5V13H3.5Z" fill="#292a2d"/></svg>
<div class="t" style="left:774px;top:755.5px;font-size:14.5px;color:#f0f0f0;">21 user mes…</div>
<svg style="left:744px;top:785px" width="17" height="17" viewBox="0 0 17 17"><circle cx="8.5" cy="8.5" r="8.2" fill="#e8434a"/><path d="M5.6 5.6L11.4 11.4M11.4 5.6L5.6 11.4" stroke="#2a1a1a" stroke-width="1.8"/></svg>
<div class="t" style="left:774px;top:785.5px;font-size:14.5px;color:#f0f0f0;">No errors</div>
<svg style="left:725px;top:819px" width="7" height="9" viewBox="0 0 7 9"><path d="M0 0V9L7 4.5Z" fill="#8a8a8a"/></svg>
<svg style="left:744px;top:814px" width="18" height="17" viewBox="0 0 18 17"><path d="M9 0.8L17.4 15.8H0.6Z" fill="#f2c40f" stroke="#f2c40f" stroke-linejoin="round"/><rect x="7.9" y="5" width="2.2" height="6" fill="#2a2a1a"/><rect x="7.9" y="12.3" width="2.2" height="2" fill="#2a2a1a"/></svg>
<div class="t" style="left:774px;top:815.5px;font-size:14.5px;color:#f0f0f0;">3 warnings</div>
<svg style="left:725px;top:849px" width="7" height="9" viewBox="0 0 7 9"><path d="M0 0V9L7 4.5Z" fill="#8a8a8a"/></svg>
<svg style="left:744px;top:845px" width="17" height="17" viewBox="0 0 17 17"><circle cx="8.5" cy="8.5" r="8.2" fill="#3367d6"/><rect x="7.5" y="7" width="2.2" height="6.5" fill="#1a1a2a"/><circle cx="8.6" cy="4.6" r="1.3" fill="#1a1a2a"/></svg>
<div class="t" style="left:774px;top:845.5px;font-size:14.5px;color:#f0f0f0;">20 info</div>
<div class="a" style="left:868px;top:719px;width:913px;height:1px;background:#383838;"></div>
<div class="a" style="left:868px;top:747px;width:913px;height:1px;background:#383838;"></div>
<div class="a" style="left:868px;top:775px;width:913px;height:1px;background:#383838;"></div>
<div class="a" style="left:868px;top:803px;width:913px;height:1px;background:#383838;"></div>
<div class="a" style="left:868px;top:831px;width:913px;height:1px;background:#383838;"></div>
<div class="a" style="left:868px;top:859px;width:913px;height:1px;background:#383838;"></div>
<svg style="left:900px;top:730px" width="7" height="9" viewBox="0 0 7 9"><path d="M0 0V9L7 4.5Z" fill="#9a9a9a"/></svg>
<div class="t mono" style="left:911px;top:729px;font-size:13.8px;font-style:italic"><span style="color:#e8e8e8">{type: </span><span style="color:#f28b54">"tap"</span><span style="color:#e8e8e8">, timeStamp: </span><span style="color:#9d87ff">97543</span><span style="color:#e8e8e8">, target: {…}, currentTarget: {…}, mark: {…}, …}</span></div>
<div class="t mono" style="left:1682px;top:729px;font-size:13.8px;color:#dcdcdc;text-decoration:underline">test.js? [sm</div>
<svg style="left:900px;top:758px" width="7" height="9" viewBox="0 0 7 9"><path d="M0 0V9L7 4.5Z" fill="#9a9a9a"/></svg>
<div class="t mono" style="left:911px;top:757px;font-size:13.8px;font-style:italic"><span style="color:#e8e8e8">{type: </span><span style="color:#f28b54">"tap"</span><span style="color:#e8e8e8">, timeStamp: </span><span style="color:#9d87ff">97700</span><span style="color:#e8e8e8">, target: {…}, currentTarget: {…}, mark: {…}, …}</span></div>
<div class="t mono" style="left:1682px;top:757px;font-size:13.8px;color:#dcdcdc;text-decoration:underline">test.js? [sm</div>
<svg style="left:900px;top:786px" width="7" height="9" viewBox="0 0 7 9"><path d="M0 0V9L7 4.5Z" fill="#9a9a9a"/></svg>
<div class="t mono" style="left:911px;top:785px;font-size:13.8px;font-style:italic"><span style="color:#e8e8e8">{type: </span><span style="color:#f28b54">"tap"</span><span style="color:#e8e8e8">, timeStamp: </span><span style="color:#9d87ff">97857</span><span style="color:#e8e8e8">, target: {…}, currentTarget: {…}, mark: {…}, …}</span></div>
<div class="t mono" style="left:1682px;top:785px;font-size:13.8px;color:#dcdcdc;text-decoration:underline">test.js? [sm</div>
<svg style="left:900px;top:814px" width="7" height="9" viewBox="0 0 7 9"><path d="M0 0V9L7 4.5Z" fill="#9a9a9a"/></svg>
<div class="t mono" style="left:911px;top:813px;font-size:13.8px;font-style:italic"><span style="color:#e8e8e8">{type: </span><span style="color:#f28b54">"tap"</span><span style="color:#e8e8e8">, timeStamp: </span><span style="color:#9d87ff">97998</span><span style="color:#e8e8e8">, target: {…}, currentTarget: {…}, mark: {…}, …}</span></div>
<div class="t mono" style="left:1682px;top:813px;font-size:13.8px;color:#dcdcdc;text-decoration:underline">test.js? [sm</div>
<svg style="left:900px;top:842px" width="7" height="9" viewBox="0 0 7 9"><path d="M0 0V9L7 4.5Z" fill="#9a9a9a"/></svg>
<div class="t mono" style="left:911px;top:841px;font-size:13.8px;font-style:italic"><span style="color:#e8e8e8">{type: </span><span style="color:#f28b54">"tap"</span><span style="color:#e8e8e8">, timeStamp: </span><span style="color:#9d87ff">98146</span><span style="color:#e8e8e8">, target: {…}, currentTarget: {…}, mark: {…}, …}</span></div>
<div class="t mono" style="left:1682px;top:841px;font-size:13.8px;color:#dcdcdc;text-decoration:underline">test.js? [sm</div>
<div class="t" style="left:1573px;top:834px;font-size:19px;color:rgba(200,200,200,0.75);">CSDN @计算机魔术师</div>
<svg style="left:0;top:0" width="1781" height="863" viewBox="0 0 1781 863"><path d="M61.1 312.5 L810.5 214.9 L809.2 220.1 L827.0 209.7 L807.1 204.3 L809.8 209.0 L60.9 311.5Z" fill="#e81c24"/><path d="M948.5 206.9 L910.7 342.2 L907.8 339.3 L907.0 366.0 L919.4 342.4 L915.5 343.4 L949.5 207.1Z" fill="#e81c24"/><path d="M1036.9 525.5 L264.8 710.1 L265.6 705.0 L249.0 717.3 L269.4 720.6 L266.3 716.4 L1037.1 526.5Z" fill="#e81c24"/></svg></body></html>
